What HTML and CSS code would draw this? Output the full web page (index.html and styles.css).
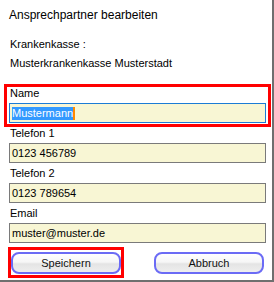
FILE: index.html
```html
<!DOCTYPE html>
<html>
<head>
  <title>Ansprechpartner bearbeiten</title>
  <link rel="stylesheet" href="styles.css">
</head>
<body>
  <div class="dialog">
    <div class="title">Ansprechpartner bearbeiten</div>

    <div class="info">
      <div class="line">Krankenkasse :</div>
      <div class="line second">Musterkrankenkasse Musterstadt</div>
    </div>

    <div class="form">
      <div class="group highlight">
        <div class="label">Name</div>
        <div class="field focused"><span class="selected">Mustermann</span><span class="caret"></span></div>
      </div>
      <div class="group plain">
        <div class="label">Telefon 1</div>
        <div class="field">0123 456789</div>
      </div>
      <div class="group plain">
        <div class="label">Telefon 2</div>
        <div class="field">0123 789654</div>
      </div>
      <div class="group plain">
        <div class="label">Email</div>
        <div class="field">muster@muster.de</div>
      </div>
    </div>

    <div class="buttons">
      <div class="mark"><button class="btn">Speichern</button></div>
      <button class="btn cancel">Abbruch</button>
    </div>
  </div>
</body>
</html>
```

FILE: styles.css
```css
body {
  margin: 0;
  font-family: "Liberation Sans", Arial, sans-serif;
  font-size: 11px;
  color: #000;
  background: #fff;
}
.dialog {
  width: 274px;
  height: 282px;
  box-sizing: border-box;
  border-right: 2px solid #6f6f6f;
  border-bottom: 2px solid #6f6f6f;
}
.title {
  padding: 8px 0 0 9px;
  font-size: 12px;
  line-height: 14px;
}
.info {
  padding: 16px 0 0 10px;
}
.line {
  line-height: 13px;
}
.line.second {
  margin-top: 6px;
}
.form {
  padding: 14px 0 0 9px;
}
.group.highlight {
  width: 257px;
  margin-left: -5px;
  border: 3px solid #ff0000;
  padding: 0 2px 1px 2px;
}
.group.plain {
  margin-bottom: 4px;
}
.label {
  line-height: 13px;
  padding-left: 1px;
}
.field {
  display: flex;
  align-items: center;
  margin-top: 3px;
  width: 257px;
  height: 20px;
  box-sizing: border-box;
  border: 1px solid #7a7a7a;
  background: #f8f6d4;
  padding-left: 2px;
  line-height: 13px;
}
.field.focused {
  border-color: #1c7cd5;
}
.selected {
  background: #3399ff;
  color: #fff;
}
.caret {
  width: 2px;
  height: 13px;
  background: #ff8a00;
}
.buttons {
  display: flex;
  align-items: flex-start;
  gap: 30px;
  margin-top: 1px;
  padding-left: 8px;
}
.mark {
  border: 3px solid #ff0000;
  padding: 2px 0 1px 0;
}
.btn {
  display: block;
  width: 110px;
  height: 22px;
  box-sizing: border-box;
  padding: 0;
  border: 2px solid #6b6bf5;
  border-radius: 8px;
  background: linear-gradient(#ffffff 0%, #f6f6f6 45%, #e4e4e4 55%, #eeeeee 100%);
  font-family: "Liberation Sans", Arial, sans-serif;
  font-size: 11px;
  color: #111;
}
.btn.cancel {
  margin-top: 5px;
}
```
